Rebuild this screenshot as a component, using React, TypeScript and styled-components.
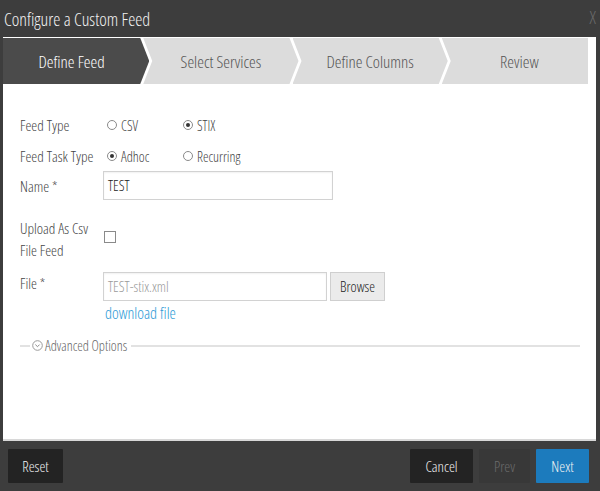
import React from 'react';
import styled, {createGlobalStyle} from 'styled-components';

const GlobalStyle = createGlobalStyle`
  html, body {
    margin: 0;
    padding: 0;
    background: #3d3d3d;
  }
  body {
    font-family: "Open Sans", sans-serif;
    font-stretch: 80%;
    font-weight: 300;
  }
`;

const Dialog = styled.div`
  width: 600px;
  height: 491px;
  background: #3d3d3d;
  display: flex;
  flex-direction: column;
  font-family: "Open Sans", sans-serif;
  font-stretch: 80%;
  font-weight: 300;
`;

const TitleBar = styled.div`
  height: 37px;
  display: flex;
  align-items: center;
  justify-content: space-between;
  padding: 0 4px;
  box-sizing: border-box;
`;

const Title = styled.div`
  color: #f2f2f2;
  font-size: 18px;
`;

const Close = styled.div`
  color: #6a6a6a;
  font-size: 19px;
  margin-top: -4px;
`;

const Body = styled.div`
  flex: 1;
  margin: 0 4px 0 3px;
  background: #fff;
  display: flex;
  flex-direction: column;
  border-bottom: 2px solid #d8d8d8;
`;

const TabBar = styled.div`
  display: flex;
  height: 46px;
  margin-top: 1px;
  padding-right: 8px;
`;

type TabPos = 'first' | 'middle' | 'last';

const shapes: Record<TabPos, string> = {
  first: 'polygon(0 0, calc(100% - 9px) 0, 100% 50%, calc(100% - 9px) 100%, 0 100%)',
  middle: 'polygon(0 0, calc(100% - 9px) 0, 100% 50%, calc(100% - 9px) 100%, 0 100%, 9px 50%)',
  last: 'polygon(0 0, 100% 0, 100% 100%, 0 100%, 9px 50%)',
};

const Tab = styled.div<{$active?: boolean; $pos: TabPos}>`
  flex: 1;
  display: flex;
  align-items: center;
  justify-content: center;
  margin-left: ${p => (p.$pos === 'first' ? '0' : '-6px')};
  padding-left: ${p => (p.$pos === 'first' ? '0' : '9px')};
  padding-right: ${p => (p.$pos === 'last' ? '0' : '9px')};
  background: ${p => (p.$active ? '#4b4b4b' : '#dcdcdc')};
  color: ${p => (p.$active ? '#ffffff' : '#555555')};
  font-size: 17px;
  clip-path: ${p => shapes[p.$pos]};
`;

const Form = styled.div`
  flex: 1;
  padding: 30px 16px 0 17px;
  display: flex;
  flex-direction: column;
`;

const Row = styled.div<{$gap: number; $align?: string}>`
  display: flex;
  align-items: ${p => p.$align || 'center'};
  margin-top: ${p => p.$gap}px;
`;

const Label = styled.div`
  width: 83px;
  flex: none;
  color: #444;
  font-size: 15px;
  line-height: 22px;
  white-space: nowrap;
`;

const RadioOption = styled.label`
  width: 76px;
  display: flex;
  align-items: center;
  gap: 4px;
  color: #444;
  font-size: 14px;
  padding-left: 4px;
  box-sizing: border-box;
`;

const RadioDot = styled.span<{$checked?: boolean}>`
  width: 10px;
  height: 10px;
  border-radius: 50%;
  border: 1px solid #8a8a8a;
  box-sizing: border-box;
  display: flex;
  align-items: center;
  justify-content: center;

  &::after {
    content: '';
    width: 4px;
    height: 4px;
    border-radius: 50%;
    background: ${p => (p.$checked ? '#333' : 'transparent')};
  }
`;

const TextInput = styled.div<{$width: number; $muted?: boolean}>`
  width: ${p => p.$width}px;
  height: 29px;
  box-sizing: border-box;
  border: 1px solid #d2d2d2;
  box-shadow: inset 0 1px 2px rgba(0, 0, 0, 0.06);
  padding-left: 4px;
  display: flex;
  align-items: center;
  font-size: 14.5px;
  color: ${p => (p.$muted ? '#9a9a9a' : '#222')};
`;

const Checkbox = styled.span`
  width: 10px;
  height: 10px;
  border: 1px solid #8a8a8a;
  margin: 14px 0 0 1px;
`;

const BrowseButton = styled.div`
  width: 55px;
  height: 29px;
  margin-left: 3px;
  box-sizing: border-box;
  background: #ebebeb;
  border: 1px solid #cfcfcf;
  display: flex;
  align-items: center;
  justify-content: center;
  font-size: 14.5px;
  color: #222;
`;

const Link = styled.a`
  margin-left: 85px;
  color: #2b9ad6;
  font-size: 16px;
  line-height: 18px;
  text-decoration: none;
`;

const Advanced = styled.div`
  display: flex;
  align-items: center;
  margin-top: 14px;
  color: #666;
  font-size: 14px;
  gap: 2px;

  &::before {
    content: '';
    width: 10px;
    height: 2px;
    background: #e2e2e2;
  }

  &::after {
    content: '';
    flex: 1;
    height: 2px;
    background: #e2e2e2;
    margin-left: 2px;
  }
`;

const Footer = styled.div`
  height: 50px;
  display: flex;
  align-items: center;
  padding: 0 11px 0 8px;
  gap: 6px;
`;

type BtnKind = 'dark' | 'disabled' | 'primary';

const Button = styled.div<{$kind: BtnKind; $width: number}>`
  width: ${p => p.$width}px;
  height: 34px;
  display: flex;
  align-items: center;
  justify-content: center;
  font-size: 15px;
  border-radius: 1px;
  background: ${p => (p.$kind === 'primary' ? '#1c7bbd' : p.$kind === 'disabled' ? '#383838' : '#232323')};
  color: ${p => (p.$kind === 'disabled' ? '#6c6c6c' : '#f2f2f2')};
`;

const Spacer = styled.div`
  flex: 1;
`;

function Radio ({label, checked}: {label: string; checked?: boolean}) {
  return (
    <RadioOption>
      <RadioDot $checked={checked} />
      {label}
    </RadioOption>
  );
}

function CircleChevron () {
  return (
    <svg width="11" height="11" viewBox="0 0 11 11">
      <circle cx="5.5" cy="5.5" r="4.8" fill="none" stroke="#9a9a9a" strokeWidth="1" />
      <path d="M3.4 4.6 L5.5 6.7 L7.6 4.6" fill="none" stroke="#8a8a8a" strokeWidth="1" />
    </svg>
  );
}

export default function App () {
  const tabs = ['Define Feed', 'Select Services', 'Define Columns', 'Review'];
  return (
    <Dialog>
      <GlobalStyle />
      <TitleBar>
        <Title>Configure a Custom Feed</Title>
        <Close>X</Close>
      </TitleBar>
      <Body>
        <TabBar>
          {tabs.map((t, i) => (
            <Tab
              key={t}
              $active={i === 0}
              $pos={i === 0 ? 'first' : i === tabs.length - 1 ? 'last' : 'middle'}
            >
              {t}
            </Tab>
          ))}
        </TabBar>
        <Form>
          <Row $gap={0}>
            <Label>Feed Type</Label>
            <Radio label="CSV" />
            <Radio label="STIX" checked />
          </Row>
          <Row $gap={9}>
            <Label>Feed Task Type</Label>
            <Radio label="Adhoc" checked />
            <Radio label="Recurring" />
          </Row>
          <Row $gap={4}>
            <Label>Name *</Label>
            <TextInput $width={230}>TEST</TextInput>
          </Row>
          <Row $gap={17} $align="flex-start">
            <Label>Upload As Csv<br />File Feed</Label>
            <Checkbox />
          </Row>
          <Row $gap={11} $align="flex-start">
            <Label>File *</Label>
            <TextInput $width={224} $muted>TEST-stix.xml</TextInput>
            <BrowseButton>Browse</BrowseButton>
          </Row>
          <Row $gap={3}>
            <Link>download file</Link>
          </Row>
          <Advanced>
            <CircleChevron />
            Advanced Options
          </Advanced>
        </Form>
      </Body>
      <Footer>
        <Button $kind="dark" $width={55}>Reset</Button>
        <Spacer />
        <Button $kind="dark" $width={63}>Cancel</Button>
        <Button $kind="disabled" $width={51}>Prev</Button>
        <Button $kind="primary" $width={53}>Next</Button>
      </Footer>
    </Dialog>
  );
}
